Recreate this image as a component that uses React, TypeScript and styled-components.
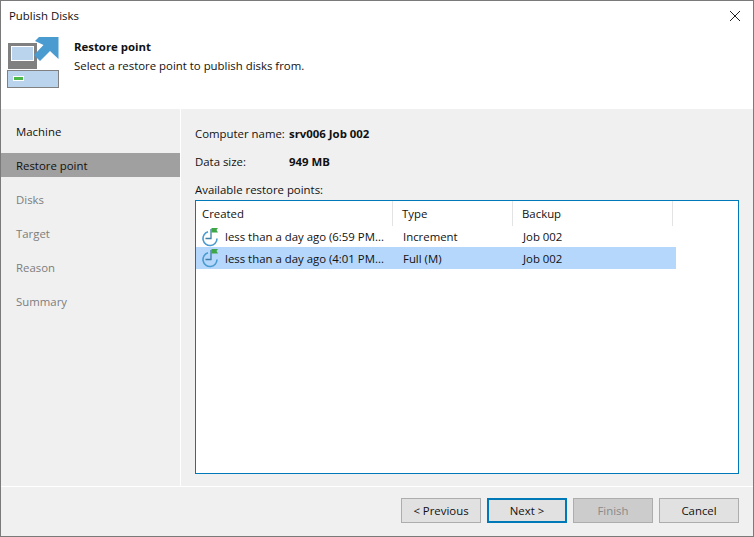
import styled, { createGlobalStyle } from 'styled-components';

const GlobalStyle = createGlobalStyle`
  html, body {
    margin: 0;
    padding: 0;
    background: #f0f0f0;
  }
  * {
    box-sizing: border-box;
  }
`;

const Window = styled.div`
  display: flex;
  flex-direction: column;
  width: 754px;
  height: 537px;
  border: 1px solid #7a7a7a;
  background: #f0f0f0;
  color: #111;
  font-family: 'Open Sans', 'Noto Sans', sans-serif;
  font-size: 11.4px;
  overflow: hidden;
`;

const Top = styled.div`
  background: #fff;
  height: 108px;
  flex: none;
`;

const TitleBar = styled.div`
  display: flex;
  align-items: center;
  justify-content: space-between;
  height: 29px;
  padding: 0 8px;
`;

const CloseButton = styled.div`
  display: flex;
  width: 16px;
  height: 16px;
  margin-right: 2px;
  align-items: center;
  justify-content: center;
`;

const Header = styled.div`
  display: flex;
  gap: 13px;
  padding: 7px 0 0 6px;
`;

const HeaderText = styled.div`
  display: flex;
  flex-direction: column;
  gap: 4px;
  padding-top: 2px;
`;

const HeaderTitle = styled.div`
  font-weight: 700;
`;

const Body = styled.div`
  display: flex;
  flex: 1;
  min-height: 0;
`;

const Sidebar = styled.div`
  width: 179px;
  flex: none;
  padding-top: 5px;
`;

const StepItem = styled.div<{ $active?: boolean; $disabled?: boolean }>`
  display: flex;
  align-items: center;
  height: 24px;
  margin-top: 10px;
  padding-left: 15px;
  background: ${({ $active }) => ($active ? '#a0a0a0' : 'transparent')};
  color: ${({ $disabled }) => ($disabled ? '#7d7d7d' : '#111')};

  &:first-child {
    margin-top: 5px;
  }
`;

const Content = styled.div`
  flex: 1;
  min-width: 0;
  display: flex;
  flex-direction: column;
  border-left: 1px solid #fff;
  padding: 15px 14px 12px 14px;
`;

const InfoRow = styled.div`
  display: flex;
  height: 18px;
  align-items: center;
  margin-bottom: 10px;
  white-space: nowrap;
`;

const InfoLabel = styled.span<{ $width: number }>`
  width: ${({ $width }) => $width}px;
`;

const InfoValue = styled.span`
  font-weight: 700;
`;

const ListLabel = styled.div`
  height: 18px;
  display: flex;
  align-items: center;
`;

const List = styled.div`
  flex: 1;
  margin-top: 2px;
  background: #fff;
  border: 1px solid #0079b8;
`;

const ListColumns = styled.div`
  display: grid;
  grid-template-columns: 197px 120px 160px;
  height: 25px;
`;

const ColumnTitle = styled.div`
  display: flex;
  align-items: center;
  padding-left: 6px;
  border-right: 1px solid #e3e3e3;

  & + & {
    padding-left: 9px;
  }
`;

const ListRow = styled.div<{ $selected?: boolean }>`
  display: grid;
  grid-template-columns: 198px 119px 163px;
  width: 480px;
  height: 21px;
  align-items: center;
  background: ${({ $selected }) => ($selected ? '#b5d7fb' : 'transparent')};

  & + & {
    height: 22px;
  }
`;

const CreatedCell = styled.div`
  display: flex;
  align-items: center;
  gap: 6px;
  padding-left: 6px;
  white-space: nowrap;
`;

const Cell = styled.div`
  padding-left: 9px;

  &:last-child {
    padding-left: 10px;
  }
`;

const Footer = styled.div`
  display: flex;
  flex: none;
  height: 50px;
  justify-content: flex-end;
  gap: 6px;
  padding: 12px 14px 0 0;
  box-shadow: inset 0 1px 0 #fff;
`;

const Button = styled.div<{ $focused?: boolean; $disabled?: boolean }>`
  display: flex;
  width: 80px;
  height: 25px;
  align-items: center;
  justify-content: center;
  background: ${({ $disabled }) => ($disabled ? '#cccccc' : '#e1e1e1')};
  border: ${({ $focused }) => ($focused ? '2px solid #0079b8' : '1px solid #adadad')};
  color: ${({ $disabled }) => ($disabled ? '#8a8a8a' : '#111')};
`;

const PublishIcon = () => (
  <svg width="54" height="52" viewBox="0 0 54 52">
    <rect x="1" y="6" width="29" height="26" fill="#808080" />
    <rect x="4.5" y="9.5" width="22" height="14" fill="#bad4ee" stroke="#fff" strokeWidth="1" />
    <path d="M32 0 H51.5 V22 L43 14 L33 24 L27 18 L36.5 8 L28 4 Z" fill="#4a9bd0" />
    <rect x="0.5" y="33.5" width="51" height="17" fill="#bad4ee" stroke="#808080" strokeWidth="1" />
    <rect x="6" y="39" width="11" height="5" fill="#fff" />
    <rect x="7" y="40" width="9" height="3" fill="#4cb848" />
  </svg>
);

const RestorePointIcon = () => (
  <svg width="17" height="20" viewBox="0 0 17 20">
    <path d="M6 4.8 A7 7 0 1 0 15 11.5" fill="none" stroke="#4a9bd0" strokeWidth="1.6" />
    <path d="M9 2 V11.5 H3.5" fill="none" stroke="#3d7ea6" strokeWidth="1.3" />
    <path d="M9.5 1 H16 L14.5 3 L16 5.5 H9.5 Z" fill="#3fa648" />
  </svg>
);

const CloseIcon = () => (
  <svg width="12" height="12" viewBox="0 0 12 12">
    <path d="M1 1 L11 11 M11 1 L1 11" stroke="#222" strokeWidth="1" />
  </svg>
);

const steps = ['Machine', 'Restore point', 'Disks', 'Target', 'Reason', 'Summary'];

const points = [
  { created: 'less than a day ago (6:59 PM...', type: 'Increment', backup: 'Job 002' },
  { created: 'less than a day ago (4:01 PM...', type: 'Full (M)', backup: 'Job 002', selected: true }
];

export default function App() {
  return (
    <>
      <GlobalStyle />
      <Window>
        <Top>
          <TitleBar>
            <span>Publish Disks</span>
            <CloseButton>
              <CloseIcon />
            </CloseButton>
          </TitleBar>
          <Header>
            <PublishIcon />
            <HeaderText>
              <HeaderTitle>Restore point</HeaderTitle>
              <span>Select a restore point to publish disks from.</span>
            </HeaderText>
          </Header>
        </Top>
        <Body>
          <Sidebar>
            {steps.map((step, i) => (
              <StepItem key={step} $active={i === 1} $disabled={i > 1}>
                {step}
              </StepItem>
            ))}
          </Sidebar>
          <Content>
            <InfoRow>
              <InfoLabel $width={94}>Computer name:</InfoLabel>
              <InfoValue>srv006 Job 002</InfoValue>
            </InfoRow>
            <InfoRow>
              <InfoLabel $width={94}>Data size:</InfoLabel>
              <InfoValue>949 MB</InfoValue>
            </InfoRow>
            <ListLabel>Available restore points:</ListLabel>
            <List>
              <ListColumns>
                <ColumnTitle>Created</ColumnTitle>
                <ColumnTitle>Type</ColumnTitle>
                <ColumnTitle>Backup</ColumnTitle>
              </ListColumns>
              {points.map(point => (
                <ListRow key={point.created} $selected={point.selected}>
                  <CreatedCell>
                    <RestorePointIcon />
                    {point.created}
                  </CreatedCell>
                  <Cell>{point.type}</Cell>
                  <Cell>{point.backup}</Cell>
                </ListRow>
              ))}
            </List>
          </Content>
        </Body>
        <Footer>
          <Button>&lt; Previous</Button>
          <Button $focused>Next &gt;</Button>
          <Button $disabled>Finish</Button>
          <Button>Cancel</Button>
        </Footer>
      </Window>
    </>
  );
}
